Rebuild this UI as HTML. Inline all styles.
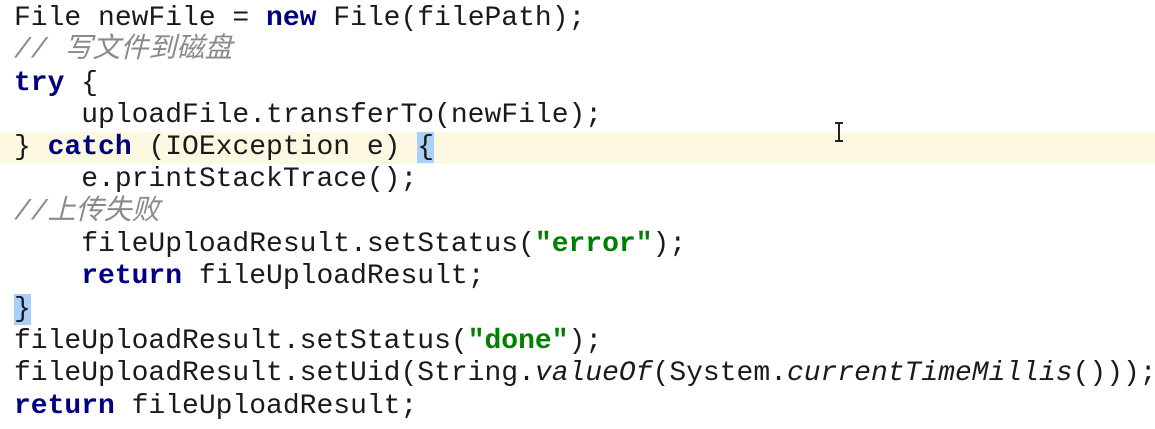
<!DOCTYPE html>
<html><head><style>
html,body{margin:0;padding:0;background:#fff;width:1155px;height:429px;overflow:hidden;}
.code{position:relative;font-family:"Liberation Mono","Noto Sans CJK SC",monospace;font-size:28px;line-height:32.3px;color:#1a1a1a;padding-top:3px;}
.l{position:relative;height:32.3px;padding-left:14px;white-space:pre;}
.hl{background:#fdf8e2;}
.k{color:#000080;font-weight:bold;}
.s{color:#008000;font-weight:bold;}
.c{color:#8a8a8a;font-style:italic;}
.i{font-style:italic;}
.b{background:#a8d0f8;}
.cur{position:absolute;left:838px;top:122px;width:2px;height:20px;background:#222;}
.cur:before,.cur:after{content:"";position:absolute;left:-3px;width:8px;height:2px;background:#222;}
.cur:before{top:0}.cur:after{bottom:0}
</style></head><body>
<div class="code">
<div class="l">File newFile = <span class="k">new</span> File(filePath);</div>
<div class="l c">// 写文件到磁盘</div>
<div class="l"><span class="k">try</span> {</div>
<div class="l">    uploadFile.transferTo(newFile);</div>
<div class="l hl">} <span class="k">catch</span> (IOException e) <span class="b">{</span></div>
<div class="l">    e.printStackTrace();</div>
<div class="l c">//上传失败</div>
<div class="l">    fileUploadResult.setStatus(<span class="s">"error"</span>);</div>
<div class="l">    <span class="k">return</span> fileUploadResult;</div>
<div class="l"><span class="b">}</span></div>
<div class="l">fileUploadResult.setStatus(<span class="s">"done"</span>);</div>
<div class="l">fileUploadResult.setUid(String.<span class="i">valueOf</span>(System.<span class="i">currentTimeMillis</span>()));</div>
<div class="l"><span class="k">return</span> fileUploadResult;</div>
</div>
<div class="cur"></div>
</body></html>
